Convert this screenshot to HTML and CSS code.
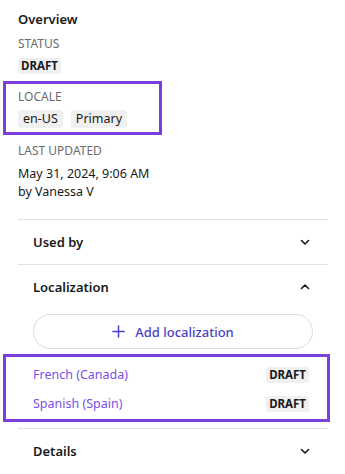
FILE: index.html
```html
<!DOCTYPE html>
<html lang="en">
<head>
    <meta charset="UTF-8">
    <meta name="viewport" content="width=device-width, initial-scale=1.0">
    <title>Entry sidebar</title>
    <link rel="stylesheet" href="styles.css">
</head>
<body>
    <aside class="sidebar">
        <section class="overview">
            <h2 class="overview-title">Overview</h2>

            <div class="field">
                <div class="field-label">Status</div>
                <div class="badges"><span class="badge badge-bold">DRAFT</span></div>
            </div>

            <div class="field field-highlight">
                <div class="field-label">Locale</div>
                <div class="badges">
                    <span class="badge">en-US</span>
                    <span class="badge">Primary</span>
                </div>
            </div>

            <div class="field">
                <div class="field-label">Last updated</div>
                <p class="field-text">May 31, 2024, 9:06 AM<br>by Vanessa V</p>
            </div>
        </section>

        <section class="accordion">
            <button class="accordion-head" type="button">
                <span>Used by</span>
                <svg class="chevron" width="10" height="10" viewBox="0 0 10 10"><path d="M1.5 3.5 L5 7 L8.5 3.5" fill="none" stroke="#1a1a1a" stroke-width="1.6" stroke-linecap="round" stroke-linejoin="round"/></svg>
            </button>
        </section>

        <section class="accordion">
            <button class="accordion-head" type="button">
                <span>Localization</span>
                <svg class="chevron" width="10" height="10" viewBox="0 0 10 10"><path d="M1.5 6.5 L5 3 L8.5 6.5" fill="none" stroke="#1a1a1a" stroke-width="1.6" stroke-linecap="round" stroke-linejoin="round"/></svg>
            </button>
            <div class="accordion-body">
                <button class="add-btn" type="button">
                    <svg width="13" height="13" viewBox="0 0 14 14"><path d="M7 1 V13 M1 7 H13" stroke="#4a3fc4" stroke-width="1.6" stroke-linecap="round"/></svg>
                    <span>Add localization</span>
                </button>
            </div>
            <ul class="locale-list">
                <li><a href="#">French (Canada)</a><span class="badge badge-bold">DRAFT</span></li>
                <li><a href="#">Spanish (Spain)</a><span class="badge badge-bold">DRAFT</span></li>
            </ul>
        </section>

        <section class="accordion">
            <button class="accordion-head" type="button">
                <span>Details</span>
                <svg class="chevron" width="10" height="10" viewBox="0 0 10 10"><path d="M1.5 3.5 L5 7 L8.5 3.5" fill="none" stroke="#1a1a1a" stroke-width="1.6" stroke-linecap="round" stroke-linejoin="round"/></svg>
            </button>
        </section>
    </aside>
</body>
</html>
```

FILE: styles.css
```css
* {
    margin: 0;
    padding: 0;
    box-sizing: border-box;
}

body {
    font-family: "Noto Sans", "Open Sans", sans-serif;
    font-size: 12.5px;
    color: #1a1a1a;
    background: white;
}

.sidebar {
    width: 345px;
    padding: 10px 17px 0 18px;
}

.overview {
    padding-bottom: 11px;
}

.overview-title {
    font-size: 13px;
    font-weight: 600;
    line-height: 18px;
    margin-bottom: 8px;
}

.field {
    margin-bottom: 7px;
}

.field-highlight {
    width: 159px;
    margin: 0 0 8px -15px;
    padding: 5px 0 4px 12px;
    border: 3px solid #7b3fe0;
}

.field-label {
    text-transform: uppercase;
    color: #6b6b70;
    font-size: 12px;
    line-height: 16px;
    margin-bottom: 6px;
}

.field-highlight .field-label {
    margin-bottom: 5px;
}

.badges {
    display: flex;
    gap: 8px;
}

.badge {
    display: inline-block;
    background: #f0f0f0;
    border-radius: 3px;
    padding: 0 5px;
    font-size: 12.5px;
    line-height: 18px;
    color: #1a1a1a;
}

.badge-bold {
    font-weight: 700;
    font-size: 11.5px;
    line-height: 16px;
    padding: 0 3px;
}

.field-text {
    line-height: 18px;
}

.accordion {
    border-top: 1px solid #e2e2e2;
}

.accordion-head {
    width: 100%;
    display: flex;
    justify-content: space-between;
    align-items: center;
    background: none;
    border: none;
    font-family: inherit;
    font-size: 13px;
    font-weight: 600;
    color: #1a1a1a;
    padding: 13px 18px 13px 15px;
    text-align: left;
    line-height: 18px;
}

.accordion-body {
    padding: 5px 15px 0 15px;
}

.add-btn {
    width: 100%;
    height: 35px;
    border: 1px solid #dcdcdc;
    border-radius: 18px;
    background: white;
    display: flex;
    align-items: center;
    justify-content: center;
    gap: 10px;
    font-family: inherit;
    font-size: 13px;
    font-weight: 500;
    color: #4a3fc4;
}

.locale-list {
    list-style: none;
    margin: 5px -2px 6px -15px;
    padding: 3px 18px 1px 27px;
    border: 3px solid #7b3fe0;
}

.locale-list li {
    display: flex;
    justify-content: space-between;
    align-items: center;
    height: 29px;
}

.locale-list a {
    color: #7a4fe8;
    text-decoration: none;
    font-size: 12.5px;
}
```
